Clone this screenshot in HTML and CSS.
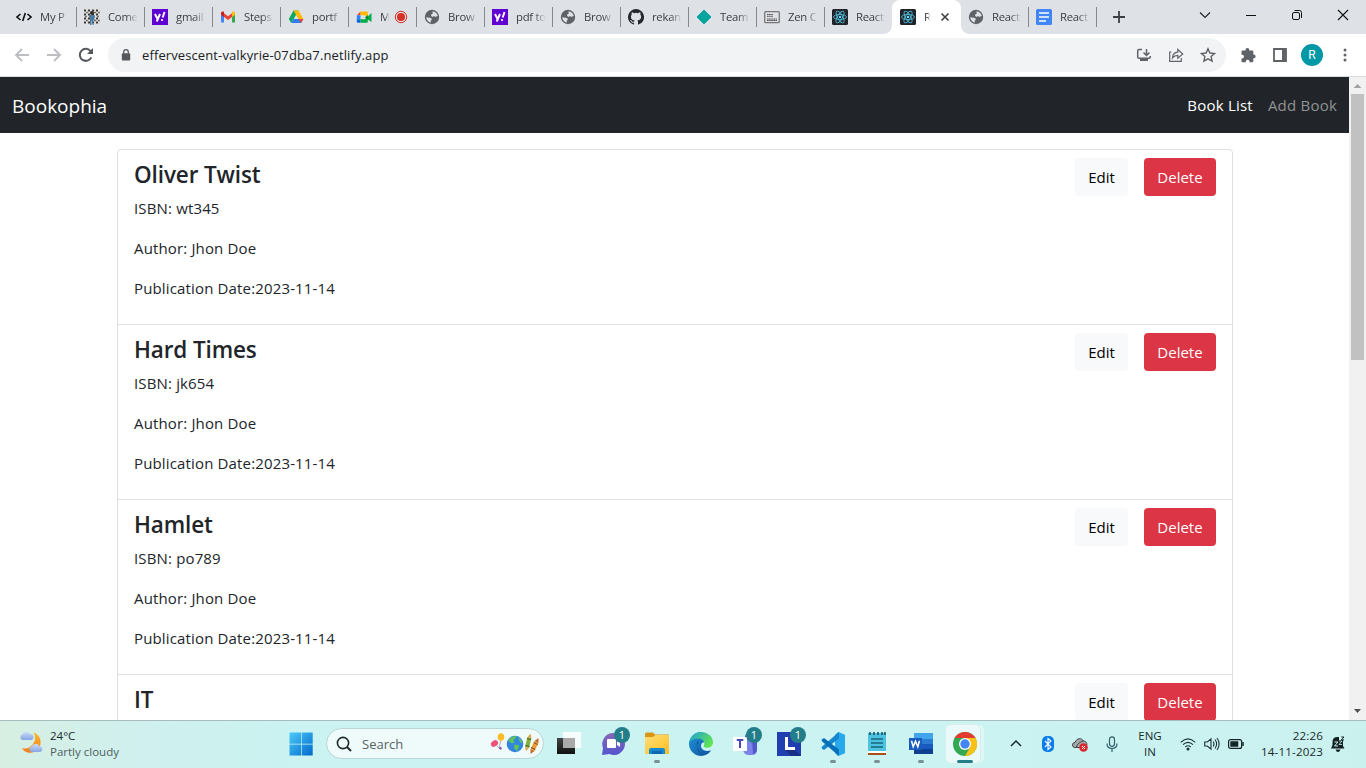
FILE: index.html
```html
<!DOCTYPE html>
<html lang="en">
<head>
<meta charset="utf-8">
<title>Bookophia</title>
<link rel="stylesheet" href="styles.css">
</head>
<body>
<svg class="defs" width="0" height="0">
  <defs>
    <linearGradient id="win" x1="0" y1="0" x2="1" y2="1"><stop offset="0" stop-color="#4ccbf9"/><stop offset="1" stop-color="#0269cc"/></linearGradient>
    <linearGradient id="moon" x1="0" y1="0" x2="0" y2="1"><stop offset="0" stop-color="#fbb92c"/><stop offset="1" stop-color="#ef7d1d"/></linearGradient>
    <linearGradient id="cloud" x1="0" y1="0" x2="0" y2="1"><stop offset="0" stop-color="#cbdcf8"/><stop offset="1" stop-color="#86a5e4"/></linearGradient>
    <linearGradient id="chat" x1="0" y1="0" x2="0" y2="1"><stop offset="0" stop-color="#8a68b4"/><stop offset="1" stop-color="#5455d0"/></linearGradient>
    <linearGradient id="edgeblue" x1="0" y1="0" x2="1" y2="1"><stop offset="0" stop-color="#2199db"/><stop offset="1" stop-color="#0d509c"/></linearGradient>
    <linearGradient id="edgegreen" x1="0" y1="0" x2="1" y2=".6"><stop offset="0" stop-color="#1a9fdc"/><stop offset="1" stop-color="#61e451"/></linearGradient>
    <linearGradient id="folder" x1="0" y1="0" x2="1" y2="1"><stop offset="0" stop-color="#ffdf76"/><stop offset="1" stop-color="#fdbd23"/></linearGradient>
    <linearGradient id="dark" x1="0" y1="0" x2="0" y2="1"><stop offset="0" stop-color="#454545"/><stop offset="1" stop-color="#101010"/></linearGradient>
  </defs>
  <symbol id="globe" viewBox="0 0 16 16"><circle cx="8" cy="8" r="7.200" fill="#5f6368"/><path d="M2.200 8.200 5.800 8.700c1.300.2 2.200 1 2 2.100l-1 .7v2.200C4.500 13.200 2.300 11 2.200 8.200ZM8.500 2.200c2.500.2 4.700 2 5.200 4.600l-2 1.200-1.800-.9-1 .9-1.900-1 .3-1.600 1.500-.8Z" fill="#dee1e6"/></symbol>
  <symbol id="yahoo" viewBox="0 0 16 16"><path fill="#5f01d1" d="M0 0h16v16H0z"/><path d="m3 5 2.300 4.500M8 5l-3.300 7.500M12.500 3 10.700 8.500" stroke="#fff" stroke-width="2" fill="none"/><circle cx="10" cy="11" r="1.100" fill="#fff"/></symbol>
  <symbol id="react" viewBox="0 0 16 16"><rect width="16" height="16" rx="1.500" fill="#20232a"/><g fill="none" stroke="#4fb6d0" stroke-width=".9"><ellipse cx="8" cy="8" rx="6.500" ry="2.600"/><ellipse cx="8" cy="8" rx="6.500" ry="2.600" transform="rotate(60 8 8)"/><ellipse cx="8" cy="8" rx="6.500" ry="2.600" transform="rotate(120 8 8)"/></g><circle cx="8" cy="8" r="1.300" fill="#61dafb"/></symbol>
</svg>

<header class="browser">
  <div class="tabs">
    <div class="tab"><svg class="fav" viewBox="0 0 16 16"><path d="M4.500 5 1 8l3.500 3M11.500 5 15 8l-3.500 3M9.300 4 6.700 12" fill="none" stroke="#111" stroke-width="1.600"/></svg><span class="tab-title">My P</span></div>
    <div class="tab"><svg class="fav" viewBox="0 0 16 16"><path fill="#ddd" d="M0 0h16v16H0z"/><path d="M0 1.500h16M0 5.500h16M0 9.500h16M0 13.500h16" stroke="#403b38" stroke-width="2" stroke-dasharray="2 2"/><path d="M2 3.500h14M1 7.500h14M2 11.500h14" stroke="#77716d" stroke-width="1.500" stroke-dasharray="2 2"/><path d="M5.500 6h5v5h-1v5H8.500v-4H7.500v4H6v-5Z" fill="#477ba4"/><circle cx="8" cy="4" r="2" fill="#332c29"/></svg><span class="tab-title">Come</span></div>
    <div class="tab"><svg class="fav"><use href="#yahoo"/></svg><span class="tab-title">gmail</span></div>
    <div class="tab"><svg class="fav" viewBox="0 0 16 16"><path d="M1 4v9.500h3V7Z" fill="#4285f4"/><path d="M15 4v9.500h-3V7Z" fill="#34a853"/><path d="M4 4.200 8 7.300l4-3.100V8l-4 3-4-3Z" fill="#ea4335"/><path d="M1 4.500C1 2.500 3 2 4 3v5L1 5.800Z" fill="#c5221f"/><path d="M15 4.500C15 2.500 13 2 12 3v5l3-2.200Z" fill="#fbbc04"/></svg><span class="tab-title">Steps</span></div>
    <div class="tab"><svg class="fav" viewBox="0 0 16 16"><path d="M5.500 1.500h5L8 6 3.200 14 .8 10Z" fill="#0da960"/><path d="M5.500 1.500h5L15.400 10h-5Z" fill="#ffba00"/><path d="M5.500 10h9.900L13 14H3.200Z" fill="#2f7cf0"/><path d="M10.500 10h4.900L13 14Z" fill="#ea4335"/></svg><span class="tab-title">portf</span></div>
    <div class="tab"><svg class="fav" viewBox="0 0 16 16"><path d="M4.500 2.500v3.800H.8Z" fill="#ea4335"/><path d="M.8 6.300h3.700v4H.8Z" fill="#2684fc"/><path d="M.8 10.300h3.700v3.500H2a1.200 1.200 0 0 1-1.200-1.200Z" fill="#0066da"/><path d="M4.500 2.500h6.300q1 0 1 1V8l-3-1.700H4.500Z" fill="#ffba00"/><path d="M4.500 10.300h4.300L15.500 4v9l-3.700-2.500v2.300q0 1-1 1H4.500Z" fill="#00ac47"/><path d="M11.800 6v4.500L9 8.200Z" fill="#00832d"/></svg><span class="tab-title narrow">M</span><svg class="rec" viewBox="0 0 14 14"><circle cx="7" cy="7" r="5.700" fill="none" stroke="#d93025"/><circle cx="7" cy="7" r="4" fill="#d93025"/></svg></div>
    <div class="tab"><svg class="fav"><use href="#globe"/></svg><span class="tab-title">Brow</span></div>
    <div class="tab"><svg class="fav"><use href="#yahoo"/></svg><span class="tab-title">pdf to</span></div>
    <div class="tab"><svg class="fav"><use href="#globe"/></svg><span class="tab-title">Brow</span></div>
    <div class="tab"><svg class="fav" viewBox="0 0 16 16"><path fill="#24292f" d="M8 0a8 8 0 0 0-2.530 15.590c.4.070.55-.17.550-.38v-1.490c-2.010.37-2.530-.49-2.690-.94-.09-.23-.48-.94-.82-1.130-.28-.15-.68-.52-.01-.53.630-.01 1.080.58 1.230.82.720 1.210 1.870.87 2.330.66.070-.52.280-.87.510-1.070-1.780-.2-3.640-.89-3.640-3.950 0-.87.310-1.590.82-2.150-.08-.2-.36-1.020.08-2.120 0 0 .67-.21 2.200.82a7.400 7.400 0 0 1 4 0c1.530-1.040 2.200-.82 2.200-.82.440 1.100.16 1.920.08 2.120.51.560.82 1.270.82 2.150 0 3.070-1.870 3.750-3.650 3.950.29.250.54.730.54 1.480v2.200c0 .21.150.46.550.38A8 8 0 0 0 8 0Z"/></svg><span class="tab-title">rekan</span></div>
    <div class="tab"><svg class="fav" viewBox="0 0 16 16"><path d="m8 1 7 7-7 7-7-7Z" fill="#06a5a0" stroke="#06a5a0" stroke-linejoin="round"/></svg><span class="tab-title">Team</span></div>
    <div class="tab"><svg class="fav" viewBox="0 0 16 16"><rect x=".7" y="2.700" width="14.600" height="11" rx="1" fill="none" stroke="#777" stroke-width="1.300"/><path d="M3 5.500h6M3 7.300h6" stroke="#555" stroke-dasharray="1.700 .4"/><path d="M3 10h10M3 11.500h10" stroke="#555" stroke-dasharray="1.700 .4"/></svg><span class="tab-title">Zen C</span></div>
    <div class="tab quiet"><svg class="fav"><use href="#react"/></svg><span class="tab-title">React</span></div>
    <div class="tab active"><svg class="fav"><use href="#react"/></svg><span class="tab-title tiny">R</span><svg class="close" viewBox="0 0 10 10"><path d="m1.500 1.500 7 7m0-7-7 7" stroke="#3c4043" stroke-width="1.600"/></svg></div>
    <div class="tab"><svg class="fav"><use href="#globe"/></svg><span class="tab-title">React</span></div>
    <div class="tab"><svg class="fav" viewBox="0 0 16 16"><rect width="16" height="16" rx="1.500" fill="#4285f4"/><path d="M3 4h10M3 8h10M3 12h7" stroke="#fff" stroke-width="1.700"/></svg><span class="tab-title">React</span></div>
    <svg class="new-tab" viewBox="0 0 12 12"><path d="M6 0v12M0 6h12" stroke="#3c4043" stroke-width="1.800"/></svg>
    <div class="window-controls">
      <svg viewBox="0 0 12 12"><path d="m1 3.500 5 5 5-5" fill="none" stroke="#222" stroke-width="1.100"/></svg>
      <svg viewBox="0 0 12 12"><path d="M1 6.500h10" stroke="#111"/></svg>
      <svg viewBox="0 0 12 12"><rect x="1.500" y="3.500" width="7" height="7" rx="1.500" fill="none" stroke="#111"/><path d="M3.500 1.500H8.500a2 2 0 0 1 2 2V9" fill="none" stroke="#111"/></svg>
      <svg viewBox="0 0 12 12"><path d="m1 1 10 10m0-10L1 11" stroke="#111" stroke-width="1.100"/></svg>
    </div>
  </div>
  <div class="toolbar">
    <div class="nav-buttons">
      <svg viewBox="0 0 16 16"><path d="M15 8H2m6-6L2 8l6 6" fill="none" stroke="#bcbec2" stroke-width="1.900"/></svg>
      <svg viewBox="0 0 16 16"><path d="M1 8h13M8 2l6 6-6 6" fill="none" stroke="#bcbec2" stroke-width="1.900"/></svg>
      <svg viewBox="0 0 16 16"><path d="M13.300 10.300A6 6 0 1 1 12.500 4.100L14 6" fill="none" stroke="#54585d" stroke-width="2"/><path d="M15 1v6H9Z" fill="#54585d"/></svg>
    </div>
    <div class="address">
      <svg class="lock" viewBox="0 0 10 12"><rect x=".8" y="4.200" width="8.400" height="7.300" rx="1" fill="#54585d"/><path d="M2.700 4.500V3a2.300 2.300 0 0 1 4.600 0v1.500" fill="none" stroke="#54585d" stroke-width="1.300"/></svg>
      <span class="url">effervescent-valkyrie-07dba7.netlify.app</span>
      <div class="address-actions">
        <svg viewBox="0 0 16 16"><path d="M6 2.500H3Q1.700 2.500 1.700 4v6q0 1.200 1.300 1.200h10q1.300 0 1.300-1.200V9M10.500 2v6M7.500 5.500l3 3 3-3" fill="none" stroke="#5f6368" stroke-width="1.500"/><path d="M4 11h8v3H4Z" fill="#5f6368"/></svg>
        <svg viewBox="0 0 16 16"><path d="M3.500 5H1.700v9.300h11.600V11M4.500 11c.2-4 2.300-5.700 5.300-5.900V2.300L14.700 7l-4.900 4.200V8.400C7.500 8.400 6 9 4.500 11Z" fill="none" stroke="#5f6368" stroke-width="1.200"/></svg>
        <svg viewBox="0 0 16 16"><path d="m8 1.700 1.900 4.300 4.700.5-3.500 3.100 1 4.600L8 11.800l-4.100 2.400 1-4.600-3.500-3.100L6.100 6Z" fill="none" stroke="#5f6368" stroke-width="1.400"/></svg>
      </div>
    </div>
    <svg class="ext" viewBox="0 0 16 16"><path d="M1.500 4.500q0-1 1-1h3V3a1.900 1.900 0 0 1 3.800 0v.5h3q1 0 1 1v3h.4a1.900 1.900 0 0 1 0 3.800h-.4v3q0 1-1 1H9.600v-.7a1.900 1.900 0 0 0-3.800 0v.7H2.500q-1 0-1-1v-2.900h.7a1.800 1.800 0 0 0 0-3.600h-.7Z" fill="#5f6368"/></svg>
    <svg class="side" viewBox="0 0 14 14"><path d="M1 1h12v12H1Z" fill="none" stroke="#5f6368" stroke-width="1.800"/><path d="M9 1h4v12H9Z" fill="#5f6368"/></svg>
    <span class="avatar">R</span>
    <svg class="more" viewBox="0 0 4 14"><g fill="#5f6368"><circle cx="2" cy="2" r="1.500"/><circle cx="2" cy="7" r="1.500"/><circle cx="2" cy="12" r="1.500"/></g></svg>
  </div>
</header>

<div class="viewport">
  <main class="page">
    <nav class="navbar"><a class="brand">Bookophia</a><div class="links"><a class="link on">Book List</a><a class="link">Add Book</a></div></nav>
    <section class="book-list">
      <article class="book"><div class="info"><h4>Oliver Twist</h4><p>ISBN: wt345</p><p>Author: Jhon Doe</p><p>Publication Date:2023-11-14</p></div><div class="actions"><button class="btn edit">Edit</button><button class="btn delete">Delete</button></div></article>
      <article class="book"><div class="info"><h4>Hard Times</h4><p>ISBN: jk654</p><p>Author: Jhon Doe</p><p>Publication Date:2023-11-14</p></div><div class="actions"><button class="btn edit">Edit</button><button class="btn delete">Delete</button></div></article>
      <article class="book"><div class="info"><h4>Hamlet</h4><p>ISBN: po789</p><p>Author: Jhon Doe</p><p>Publication Date:2023-11-14</p></div><div class="actions"><button class="btn edit">Edit</button><button class="btn delete">Delete</button></div></article>
      <article class="book"><div class="info"><h4>IT</h4></div><div class="actions"><button class="btn edit">Edit</button><button class="btn delete">Delete</button></div></article>
    </section>
  </main>
  <div class="scrollbar"><svg viewBox="0 0 17 17"><path d="m4.500 11 4-4 4 4Z" fill="#a3a3a3"/></svg><div class="thumb"></div><svg class="down" viewBox="0 0 17 17"><path d="m5 6 3.500 4L12 6Z" fill="#505050"/></svg></div>
</div>

<footer class="taskbar">
  <div class="weather">
    <svg viewBox="0 0 24 24"><path d="M14.500 2.500a10.500 10.500 0 0 1-12 15.500 10.400 10.400 0 0 0 19-7.300c-.4-3.700-3-7-7-8.200Z" fill="url(#moon)"/><path d="M3 10a3 3 0 0 1 .3-5.600A4.300 4.300 0 0 1 11 4a3 3 0 0 1 1 6Z" fill="url(#cloud)"/><path d="M12.700 22a2.800 2.800 0 0 1 0-5.500 4.200 4.200 0 0 1 7.600-.4 3 3 0 0 1 .7 5.900Z" fill="url(#cloud)"/></svg>
    <div><div class="temp">24°C</div><div class="cond">Partly cloudy</div></div>
  </div>
  <div class="cell start"><svg class="app" viewBox="0 0 24 24"><path d="M.5.500H12v11.200H.5ZM12.700.500h11v11.200h-11ZM.5 12.500H12v11H.5ZM12.700 12.500h11v11h-11Z" fill="url(#win)"/></svg></div>
  <div class="search">
    <svg class="glass" viewBox="0 0 16 16"><circle cx="7" cy="7" r="5.600" fill="none" stroke="#202829" stroke-width="1.600"/><path d="m11 11 4 4" stroke="#202829" stroke-width="2"/></svg>
    <span>Search</span>
    <svg class="toys" viewBox="0 0 50 22"><path d="m11 7-1.500 6M7 13l3 3" stroke="#9b81a1" stroke-width=".7"/><ellipse cx="11" cy="4" rx="3.300" ry="3.800" fill="#fbbd25"/><ellipse cx="4.500" cy="10.500" rx="3.800" ry="3" fill="#ec5578" transform="rotate(-30 4.500 10.500)"/><path d="M9.500 13 12 15l-1 2-2-1.500Z" fill="#815fb2"/><circle cx="25" cy="11" r="8.300" fill="#3285e0"/><path d="M19.500 5.500q3.500-3 7-2.500l-1 2.500-2.500 1.500 1.500 2-2.500 1.500-3.500-2.500Zm5 6 5 1-2.500 5.500-3-3Zm3.500-7 3 2 1.500 4-2.500-1.500Z" fill="#5fc653"/><path d="m37.500 4 4 1-2.500 10-4-1Z" fill="#83ad3a"/><path d="m37.500 4 3-3.500 1 4.500ZM35 14l4 1-3 3Z" fill="#dfa54f"/><path d="m37 5.500 4 1m-5.500 6 4 1" stroke="#47602d"/><path d="m44.500 8 4 2-4 8-4-2Z" fill="#ee9a35"/><path d="m44.500 8 4-3v5ZM40.500 16l4 2-4 3Z" fill="#c66a28"/><path d="m43.700 9.500 4 2m-6.500 3 4 2" stroke="#774a2b"/></svg>
  </div>
  <div class="apps">
    <div class="cell"><svg class="app" viewBox="0 0 24 24"><path d="M0 6h18v16H0Z" fill="url(#dark)"/><path d="M6 0h18v16H6Z" fill="#fff" opacity=".82"/><path d="M6 6h12v10H6Z" fill="#aaa"/></svg></div>
    <div class="cell"><svg class="app" viewBox="0 0 24 24"><path d="M12 1a11 11 0 1 1-3.500 21L1 23l1-7A11 11 0 0 1 12 1Z" fill="url(#chat)"/><rect x="6" y="7" width="9" height="9" rx="1" fill="#fff"/><path d="m16 10 3-2v7l-3-2Z" fill="#fff"/></svg><span class="badge">1</span></div>
    <div class="cell run"><svg class="app" viewBox="0 0 24 24"><path d="M0 2q0-1.500 1.500-1.500H8l2 2h13q1 0 1 1V8H0Z" fill="#d99614"/><path d="M0 5h8l2.500-2H23q1 0 1 1v18H0Z" fill="url(#folder)"/><path d="M4 22v-4q0-2 2-2h12q2 0 2 2v4Z" fill="#1687d1"/><path d="M7 19h10v3H7Z" fill="#0e67ad"/></svg></div>
    <div class="cell"><svg class="app" viewBox="0 0 24 24"><path d="M12 0a12 12 0 1 0 10.200 18.300c-4 1.700-8.200.5-9.700-2.500-1-2-.3-3.700.7-4.800L17 9Z" fill="url(#edgeblue)"/><path d="M.2 11C1.500 4 6.500 0 12 0c7.500 0 12 5.200 12 10.300 0 3.500-2.600 5.500-5.800 5.500-2.400 0-4-.8-3.500-2C17 10 13.500 6.500 9 6.500c-4 0-7.400 1.700-8.800 4.500Z" fill="url(#edgegreen)"/><path d="M9.500 10C6 14.500 9 22 16 23.300A12 12 0 0 1 8 9.500Z" fill="#104c90"/></svg></div>
    <div class="cell"><svg class="app" viewBox="0 0 24 24"><circle cx="16" cy="5" r="4" fill="#5059c9"/><path d="M10 8h14v10q0 5-5 5h-3q-5 0-6-5Z" fill="#7b83eb"/><path d="M19 8h5v9q0 4-4 5Z" fill="#5059c9"/><path d="M0 5h14v14H0Z" fill="#fff"/><path d="M3.800 8h6.500M7 8v8" stroke="#4548b5" stroke-width="2"/></svg><span class="badge">1</span></div>
    <div class="cell"><svg class="app" viewBox="0 0 24 24"><path d="M0 0h24v24H0Z" fill="#203eb0"/><path d="m8 18 10 0 6 6H14Z" fill="#182f85"/><path d="M9.500 5v11.500H18" fill="none" stroke="#fff" stroke-width="3"/></svg><span class="badge">1</span></div>
    <div class="cell run"><svg class="app" viewBox="0 0 24 24"><path d="m17 0 7 3v18l-7 3-3-3V3Z" fill="#29a9ed"/><path d="M18 0 1.200 14.500q-1.200 1.200 0 2.300L3 18 18 6.500Z" fill="#1686cf"/><path d="M18 24 1.200 9.500Q0 8.300 1.200 7.200L3 6l15 11.500Z" fill="#0870b8"/><path d="m17 0 7 3v18l-7 3q1-.5 1-2V2q0-1.500-1-2Z" fill="#29a9ed"/></svg></div>
    <div class="cell run"><svg class="app" viewBox="0 0 24 24"><path d="M3 1h18v21H3Z" fill="#4cc2de"/><path d="M5 3V0m4 3V0m4 3V0m4 3V0m3 3V0" stroke="#164c61" stroke-width="1.500"/><path d="M6 7h12M6 11h12M6 15h12" stroke="#16677e" stroke-width="1.500"/><path d="M3 19h18v2H3Z" fill="#fff"/><path d="M3 21h18v2H3Z" fill="#a94f15"/></svg></div>
    <div class="cell run"><svg class="app" viewBox="0 0 24 24"><path d="M5 1h19v6H5Z" fill="#41a5ee"/><path d="M5 7h19v5H5Z" fill="#2b7cd3"/><path d="M5 12h19v5H5Z" fill="#185abd"/><path d="M5 17h19v5H5Z" fill="#103f91"/><path d="M0 6h13v12H0Z" fill="#185abd"/><path d="m2.500 8.700 1.700 6 2.300-5.500 2.300 5.500 1.700-6" fill="none" stroke="#fff" stroke-width="1.600"/></svg></div>
    <div class="cell current"><svg class="app" viewBox="0 0 24 24"><circle cx="12" cy="12" r="12" fill="#34a853"/><path d="M12 12 1.600 6A12 12 0 0 1 22.400 6Z" fill="#e33b2e"/><path d="M12 6h10.400A12 12 0 0 1 12 24l5.200-9Z" fill="#fbc116"/><path d="M1.600 6 7 15l5-9Z" fill="#34a853"/><circle cx="12" cy="12" r="6" fill="#fff"/><circle cx="12" cy="12" r="4.700" fill="#4285f4"/></svg></div>
  </div>
  <div class="tray">
    <div><svg viewBox="0 0 16 16"><path d="m3 10 5-5 5 5" fill="none" stroke="#172a2d" stroke-width="1.500"/></svg></div>
    <div><svg viewBox="0 0 16 16"><rect x="2" y="0" width="12" height="16" rx="5" fill="#087df1"/><path d="m5 5 6 6-3 2.500v-11L11 5l-6 6" fill="none" stroke="#fff" stroke-width="1.100"/></svg></div>
    <div><svg viewBox="0 0 16 16"><path d="M3 11.500a2.500 2.500 0 0 1 0-5C4.500 2 9.500 1.500 11.500 5c3 .1 4 3 3 5l-2 1.500Z" fill="#a6aaaa" stroke="#3d4546"/><path d="M4.500 11q1-4.500 7-6" fill="none" stroke="#444"/><circle cx="11.500" cy="11.500" r="4.300" fill="#db292f"/><path d="m10 10 3 3m0-3-3 3" stroke="#fff"/></svg></div>
    <div><svg viewBox="0 0 16 16"><rect x="5.500" y=".8" width="5" height="9.500" rx="2.500" fill="none" stroke="#315e68" stroke-width="1.200"/><path d="M3 7.500q0 5 5 5t5-5M8 12.500V16" fill="none" stroke="#315e68" stroke-width="1.200"/></svg></div>
  </div>
  <div class="lang">ENG<br>IN</div>
  <div class="status">
    <svg viewBox="0 0 16 16"><path d="M.8 6.300Q8-.500 15.200 6.300M3 8.700q5-4.800 10 0M5.300 11Q8 8.500 10.700 11" fill="none" stroke="#1d3234" stroke-width="1.100"/><circle cx="8" cy="13" r="1.500" fill="#1d3234"/></svg>
    <svg viewBox="0 0 16 16"><path d="M.7 6h2.500L7 3v10L3.200 10H.7Zm8.500-.5q1.500 2.500 0 5M11 3.500q3.300 4.500 0 9M13 2q4.300 6 0 12" fill="none" stroke="#1d3234" stroke-width="1.100"/></svg>
    <svg viewBox="0 0 16 16"><rect x=".6" y="3.600" width="13" height="8.800" rx="2" fill="none" stroke="#172426" stroke-width="1.200"/><rect x="2.300" y="5.300" width="8" height="5.400" rx=".5" fill="#172426"/><path d="M15 6v4" stroke="#172426" stroke-width="1.500"/></svg>
  </div>
  <div class="clock">22:26<br>14-11-2023</div>
  <svg class="bell" viewBox="0 0 16 16"><path d="M1 12.500 2.500 9V6q0-5 5-5H9v3h4v6l1.500 2.500ZM5.500 13.500h5Q9.500 16 8 16t-2.500-2.500Z" fill="#122022"/><path d="M4.500 6H8l-3.500 4H8" fill="none" stroke="#caf2f0"/><path d="M9 5h3l-3 3.500h3" fill="none" stroke="#caf2f0" stroke-width=".8"/><path d="M11.300 1H14l-2.700 3H14" fill="none" stroke="#122022"/></svg>
</footer>
</body>
</html>
```
FILE: styles.css
```css
* { box-sizing: border-box; }
body { margin: 0; width: 1366px; height: 768px; overflow: hidden; display: flex; flex-direction: column; background: #fff; font-family: "Open Sans", "Noto Sans", sans-serif; color: #212529; }
svg { display: block; flex: none; }
.defs { position: absolute; }

.browser { height: 77px; flex: none; background: #fff; border-bottom: 1px solid #d9dcdf; }
.tabs { height: 34px; display: flex; align-items: center; padding-left: 9px; background: #dee1e6; }
.tab { position: relative; width: 68px; height: 34px; flex: none; display: flex; align-items: center; padding-left: 7px; gap: 8px; }
.tab::after { content: ""; position: absolute; right: 0; top: 7px; width: 1px; height: 20px; background: #85888d; }
.tab.quiet::after { display: none; }
.tab.active { background: #fff; border-radius: 8px 8px 0 0; box-shadow: -1px 0 #fff; }
.tab.active::before, .tab.active::after { content: ""; position: absolute; top: auto; bottom: 0; width: 8px; height: 8px; background: radial-gradient(circle at 0 0, transparent 7.5px, #fff 8px); }
.tab.active::before { left: -9px; }
.tab.active::after { right: -8px; background: radial-gradient(circle at 100% 0, transparent 7.5px, #fff 8px); }
.fav { width: 16px; height: 16px; }
.tab-title { width: 30px; white-space: nowrap; font-size: 11.3px; letter-spacing: -.25px; line-height: 18px; color: #3c4043; mask-image: linear-gradient(90deg, #000 60%, transparent); }
.tab-title.narrow { width: 9px; margin-right: -1px; }
.tab-title.tiny { width: 6px; margin-right: 2px; }
.rec { width: 14px; height: 14px; margin-left: -2px; }
.close { width: 10px; height: 10px; }
.new-tab { width: 12px; height: 12px; margin-left: 16px; }
.window-controls { display: flex; gap: 34px; margin: -5px 17px 0 auto; }
.window-controls svg { width: 12px; height: 12px; }

.toolbar { height: 42px; display: flex; align-items: center; padding-left: 14px; }
.nav-buttons { display: flex; gap: 16px; width: 94px; }
.nav-buttons svg { width: 16px; height: 16px; }
.address { width: 1118px; height: 34px; border-radius: 17px; background: #f1f3f4; display: flex; align-items: center; padding-left: 13px; }
.lock { width: 10px; height: 12px; }
.url { margin-left: 11px; font-size: 13px; letter-spacing: .11px; color: #202124; }
.address-actions { display: flex; gap: 16px; margin: 0 10px 0 auto; }
.address-actions svg, .ext { width: 16px; height: 16px; }
.ext { margin-left: 14px; }
.side { width: 14px; height: 14px; margin-left: 17px; }
.avatar { width: 22px; height: 22px; border-radius: 50%; margin-left: 14px; background: #0097a7; color: #fff; font: 12px/22px Roboto, sans-serif; text-align: center; }
.more { width: 4px; height: 14px; margin-left: 20px; }

.viewport { height: 643px; display: flex; overflow: hidden; }
.page { width: 1349px; overflow: hidden; }
.navbar { height: 56px; padding: 0 12px; display: flex; align-items: center; justify-content: space-between; background: #212529; }
.brand { font-size: 19px; color: #fff; padding-top: 1px; }
.links { display: flex; gap: 15px; }
.link { font-size: 15px; letter-spacing: .22px; color: #909294; }
.link.on { color: #fff; }
.book-list { width: 1116px; margin: 16px auto 0 117px; border: 1px solid #dfdfdf; border-radius: 4px 4px 0 0; }
.book { display: flex; justify-content: space-between; height: 175px; padding: 8px 16px; border-bottom: 1px solid #dfdfdf; }
.book h4 { margin: 0 0 8px; font-size: 22.5px; letter-spacing: -.12px; line-height: 34px; height: 30px; font-weight: 600; }
.book p { margin: 0 0 16px; font-size: 15px; letter-spacing: .15px; line-height: 25px; height: 24px; }
.actions { display: flex; gap: 16px; }
.btn { height: 38px; border: 0; border-radius: 4px; padding: 0; font: 15px/24px "Open Sans", sans-serif; }
.edit { width: 53px; background: #f8f9fa; color: #000; }
.delete { width: 72px; background: #dc3545; color: #fff; }

.scrollbar { width: 17px; background: #f1f1f1; display: flex; flex-direction: column; align-items: center; }
.scrollbar svg { width: 17px; height: 17px; }
.thumb { width: 13px; height: 266px; background: #c1c1c1; }
.down { margin-top: auto; }

.taskbar { height: 48px; border-top: 1px solid #a7bcbc; padding-bottom: 2px; display: flex; align-items: center; background: linear-gradient(90deg, #d7efe2 0, #d0f0ee 130px, #caf3f1 300px, #caf3f1 1000px, #cbf1ef 1366px); }
.weather { width: 279px; padding-left: 19px; display: flex; gap: 7px; }
.weather svg { width: 24px; height: 24px; margin-top: 2px; }
.temp, .cond { font-size: 11.5px; line-height: 16px; color: #172a2a; white-space: nowrap; }
.cond { color: #4d605f; }
.cell { position: relative; width: 44px; height: 47px; display: flex; align-items: center; justify-content: center; flex: none; }
.start { padding-right: 1px; }
.app { width: 24px; height: 24px; }
.badge { position: absolute; right: 5px; top: 7px; width: 16px; height: 16px; border-radius: 50%; background: #247e89; color: #fff; font-size: 11px; line-height: 16px; text-align: center; }
.run::after { content: ""; position: absolute; left: 19px; bottom: 4px; width: 6px; height: 3px; border-radius: 2px; background: #789293; }
.search { width: 218px; height: 31px; margin: 0 3px; padding: 0 3px 0 9px; display: flex; align-items: center; border: 1px solid #b9d4d4; border-radius: 16px; background: #effbfb; }
.glass { width: 16px; height: 16px; }
.search span { margin-left: 10px; font-size: 13px; color: #566264; }
.toys { width: 50px; height: 22px; margin-left: auto; }
.apps { display: flex; }
.current { z-index: 0; }
.current::before { content: ""; position: absolute; z-index: -1; left: 3px; top: 5px; width: 34px; height: 38px; border-radius: 5px; background: #eafafa; box-shadow: 0 0 0 1px #d8eeed, 4px 0 #dff7f6; }
.current::after { content: ""; position: absolute; left: 14px; bottom: 4px; width: 16px; height: 3px; border-radius: 2px; background: #247e89; }
.tray { display: flex; margin-left: 13px; }
.tray div { width: 32px; display: flex; justify-content: center; }
.tray svg { width: 16px; height: 16px; }
.lang { width: 44px; font-size: 11.5px; line-height: 16px; text-align: center; color: #172a2a; }
.status { display: flex; gap: 8px; padding: 0 8px; }
.status svg { width: 16px; height: 16px; }
.clock { margin-left: auto; font-size: 11.6px; letter-spacing: .15px; line-height: 16px; text-align: right; color: #172a2a; }
.bell { width: 16px; height: 16px; margin: 0 20px 0 7px; }
```
